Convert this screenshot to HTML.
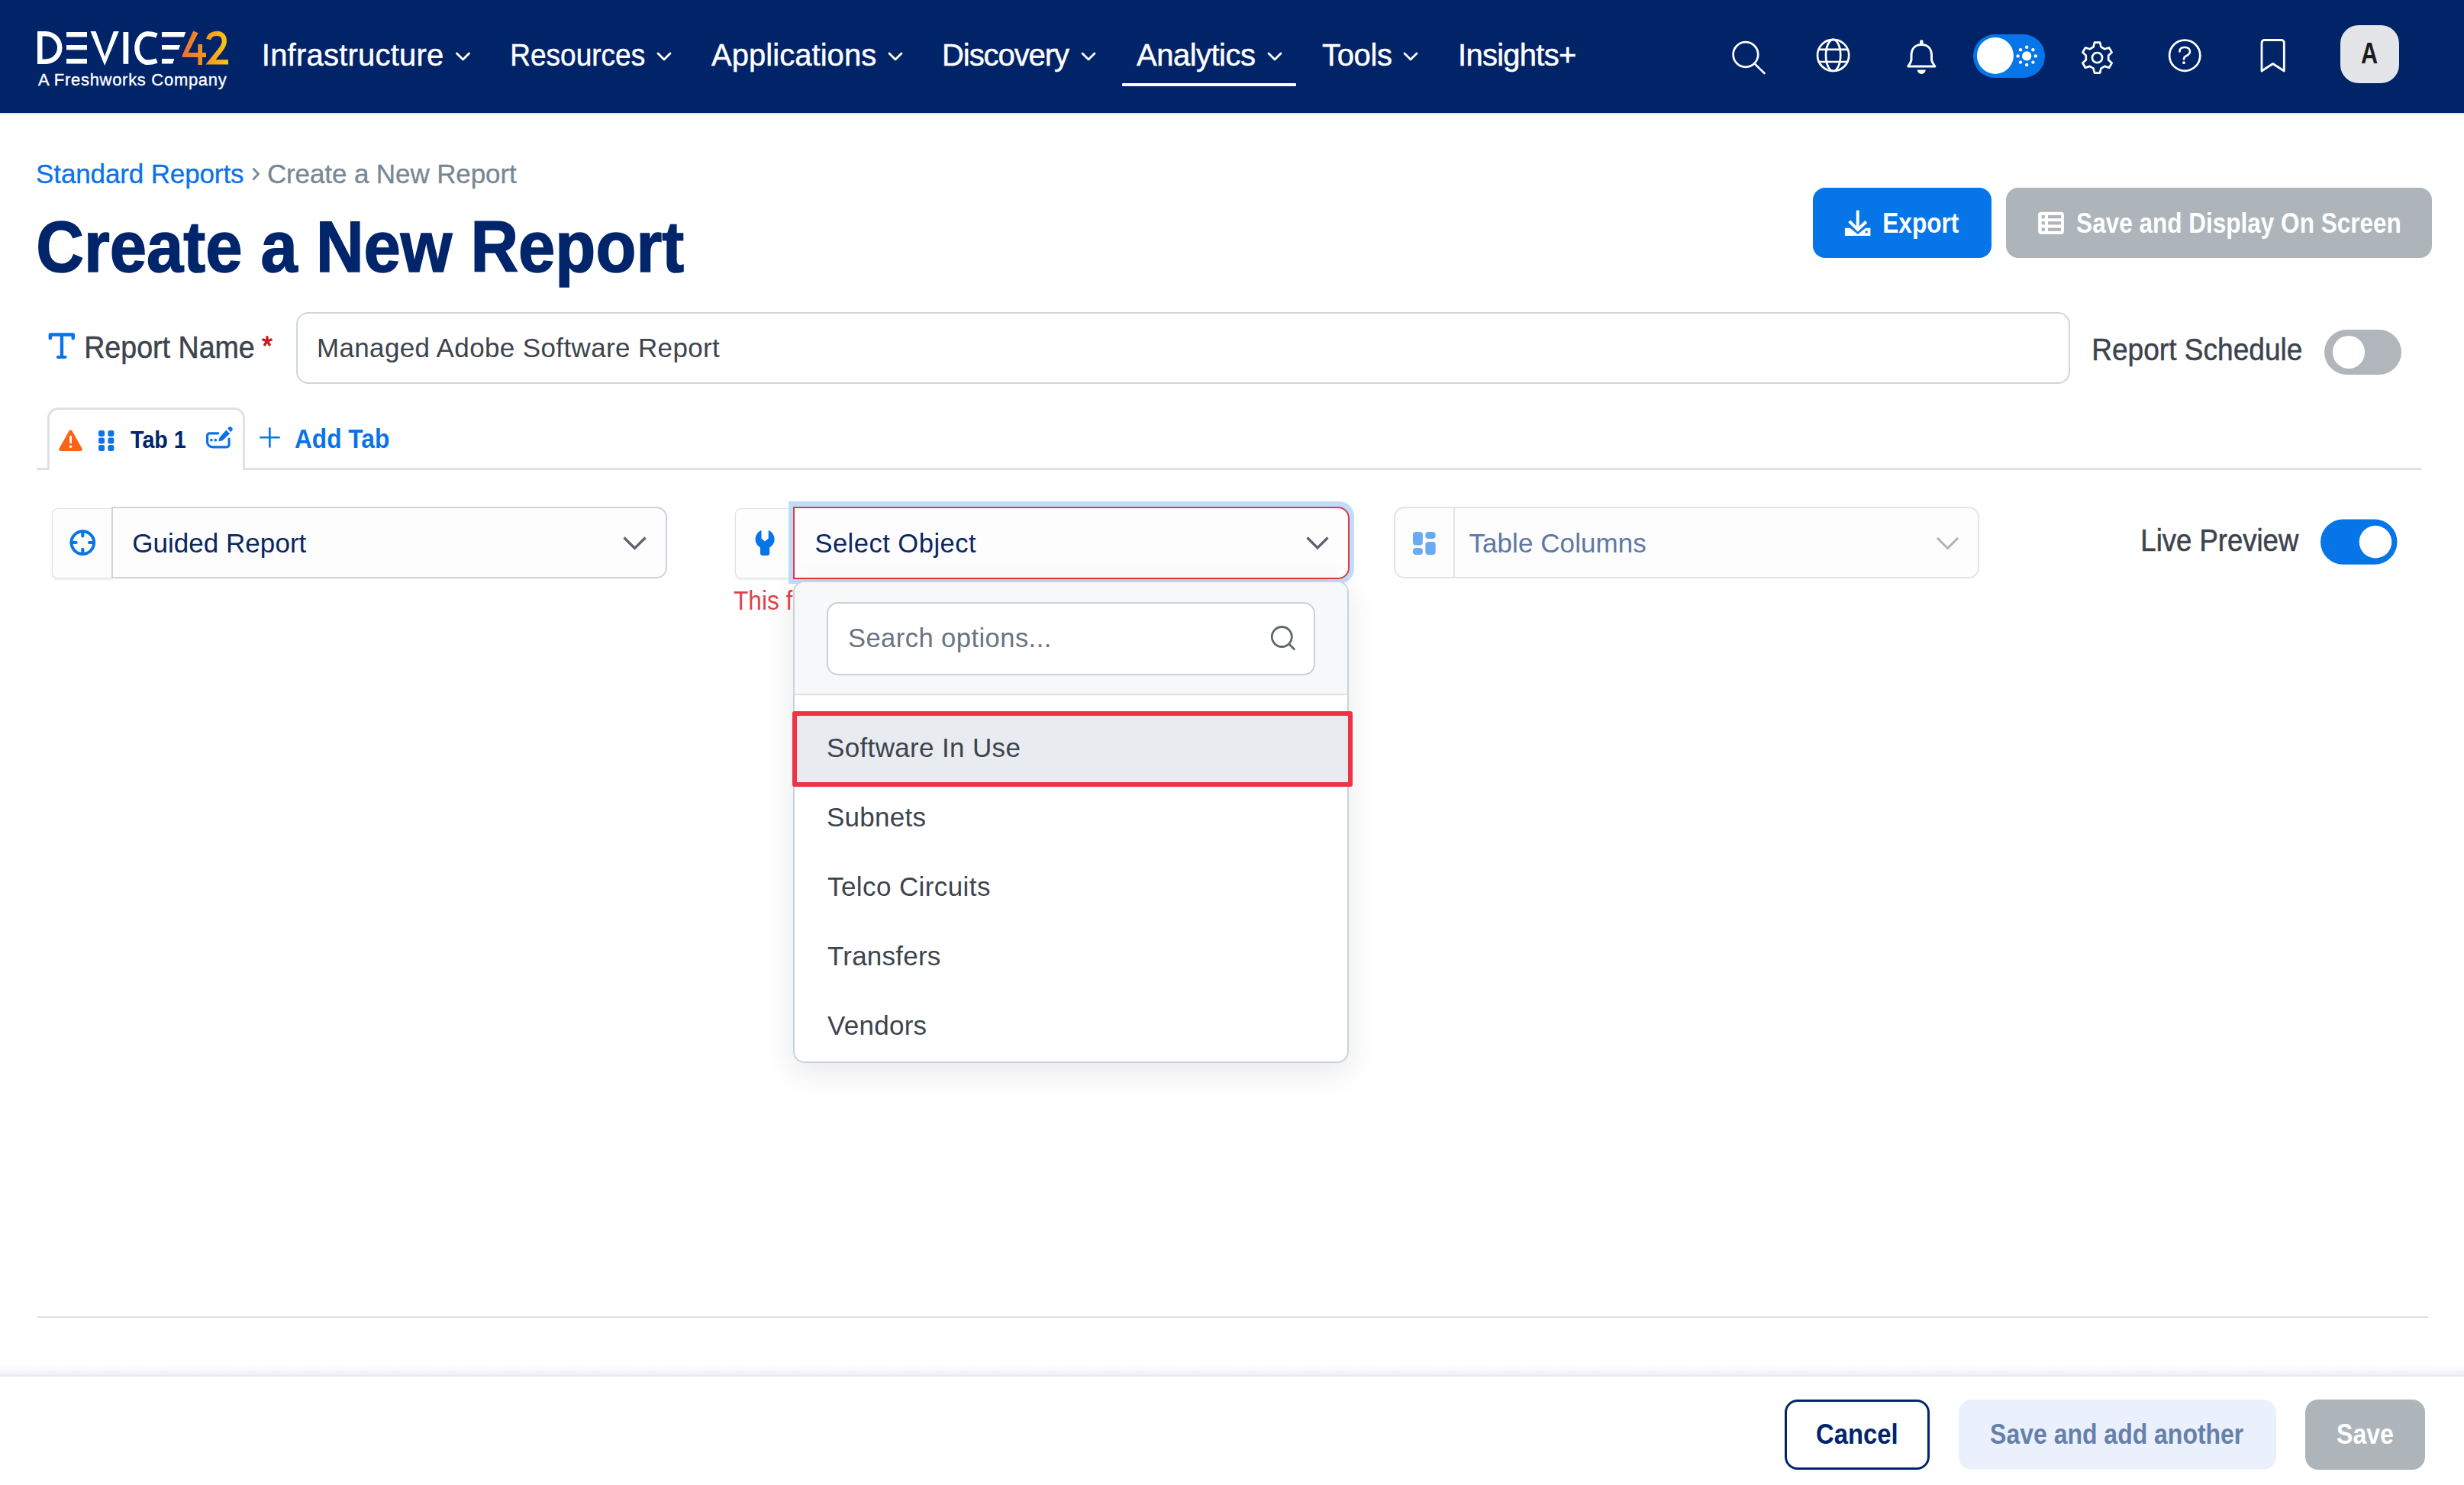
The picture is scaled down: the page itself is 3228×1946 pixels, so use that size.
<!DOCTYPE html>
<html><head><meta charset="utf-8">
<style>
*{box-sizing:border-box}
html,body{margin:0;padding:0}
body{width:3228px;height:1946px;position:relative;overflow:hidden;background:#fff;font-family:"Liberation Sans",sans-serif}
.a{position:absolute}
.t{position:absolute;white-space:nowrap;line-height:1;font-family:"Liberation Sans",sans-serif;z-index:7}
svg{position:absolute;overflow:visible}
</style></head><body>
<!-- navbar -->
<div class="a" style="left:0;top:0;width:3228px;height:148px;background:#012469"></div>
<div class="a" style="left:0;top:148px;width:3228px;height:2px;background:#e2e7eb"></div>
<svg style="left:0;top:0" width="320" height="148">
 <defs><linearGradient id="lg" x1="238" y1="0" x2="300" y2="0" gradientUnits="userSpaceOnUse"><stop offset="0" stop-color="#ee6f2f"/><stop offset="0.5" stop-color="#f59422"/><stop offset="1" stop-color="#fdca0e"/></linearGradient></defs>
 <path fill="#fff" fill-rule="evenodd" d="M49,41H60A21.5,21.5 0 0 1 60,84H49Z M55.5,47.5V77.5H60A15,15 0 0 0 60,47.5Z"/>
 <rect x="87" y="42" width="27" height="6.5" fill="#fff"/>
 <rect x="87" y="59" width="27" height="6.4" fill="#fff"/>
 <rect x="87" y="77" width="27" height="6.5" fill="#fff"/>
 <polygon fill="#fff" points="118.5,41 125.6,41 137.2,74 148.8,41 155.8,41 137.2,86"/>
 <rect x="161.4" y="42" width="6.9" height="41.8" fill="#fff"/>
 <path fill="none" stroke="#fff" stroke-width="6.5" d="M205.5,46.5C201,44.8 197,44.2 193.5,44.2A14,18.8 0 0 0 193.5,81.8C197,81.8 201,81.2 205.5,79.5"/>
 <polygon fill="#fff" points="212,42 243.2,42 241,48.6 212,48.6"/>
 <polygon fill="#fff" points="212,59 236,59 234,65 212,65"/>
 <polygon fill="#fff" points="212,77 228.3,77 226.3,83.5 212,83.5"/>
 <polygon fill="url(#lg)" points="253.2,40.4 259.6,43.2 246.6,69 270,69 270,75 238.7,75 238.7,72.5"/>
 <rect x="259.4" y="58" width="5.6" height="27" fill="url(#lg)"/>
 <path fill="none" stroke="url(#lg)" stroke-width="6.3" d="M273,51.5C274.5,46 279,43.8 284.5,43.8C290.5,43.8 293.8,48 293.8,54C293.8,58 292,61 289.5,64.5L276,81.4H299"/>
</svg>
<!-- nav chevrons -->
<svg style="left:0;top:0" width="3228" height="148">
 <g fill="none" stroke="#fff" stroke-width="2.8" stroke-linecap="round" stroke-linejoin="round">
  <polyline points="598.5,70 606.5,78 614.5,70"/>
  <polyline points="862,70 870,78 878,70"/>
  <polyline points="1165,70 1173,78 1181,70"/>
  <polyline points="1418,70 1426,78 1434,70"/>
  <polyline points="1662,70 1670,78 1678,70"/>
  <polyline points="1840,70 1848,78 1856,70"/>
 </g>
 <rect x="1470" y="109" width="228" height="4" rx="1" fill="#fff"/>
 <!-- search -->
 <g fill="none" stroke="#fff" stroke-width="2.7" stroke-linecap="round">
  <circle cx="2286.9" cy="71.5" r="16.3"/>
  <line x1="2298.8" y1="83.6" x2="2311.5" y2="96"/>
  <!-- globe -->
  <circle cx="2401.6" cy="72.4" r="20.6"/>
  <ellipse cx="2401.6" cy="72.4" rx="9.6" ry="20.6"/>
  <line x1="2383" y1="64.8" x2="2420" y2="64.8"/>
  <line x1="2383" y1="81" x2="2420" y2="81"/>
  <!-- gear -->
  <circle cx="2747.5" cy="75.6" r="6.6"/>
  <!-- help -->
  <circle cx="2862.2" cy="72.7" r="20.1"/>
  <path d="M2855.5,67.5C2855.5,63.5 2858.5,62 2862,62C2866,62 2869,64 2869,67.5C2869,71 2866.5,72 2863.5,73.6C2861.5,74.8 2861,75.8 2861,77.5"/>
 </g>
 <circle cx="2861" cy="82.2" r="1.9" fill="#fff"/>
 <!-- bell -->
 <path fill="none" stroke="#fff" stroke-width="3" stroke-linejoin="round" d="M2517.3,58.5C2508,58.5 2504,65 2504,73V78C2504,81 2501.5,84 2499.8,87H2534.8C2533,84 2530.5,81 2530.5,78V73C2530.5,65 2526.5,58.5 2517.3,58.5Z"/>
 <path fill="#fff" d="M2515,54.5A2.3,2.3 0 0 1 2519.6,54.5V58H2515Z"/>
 <path fill="#fff" d="M2511.8,91.5H2522.7A5.45,5.45 0 0 1 2511.8,91.5Z"/>
 <!-- gear outline -->
 <path fill="none" stroke="#fff" stroke-width="2.7" stroke-linejoin="round" d="M2744,55.6H2751L2752.5,61.5L2757.3,64.3L2763,62.5L2766.6,68.6L2762.2,72.7V78.5L2766.6,82.6L2763,88.7L2757.3,86.9L2752.5,89.7L2751,95.6H2744L2742.5,89.7L2737.7,86.9L2732,88.7L2728.4,82.6L2732.8,78.5V72.7L2728.4,68.6L2732,62.5L2737.7,64.3L2742.5,61.5Z"/>
 <!-- bookmark -->
 <path fill="none" stroke="#fff" stroke-width="2.8" stroke-linejoin="round" d="M2963,93V56A3.5,3.5 0 0 1 2966.5,52.5H2988.8A3.5,3.5 0 0 1 2992.3,56V93L2977.6,83.5Z"/>
 <!-- theme toggle -->
 <rect x="2585" y="45" width="94" height="57" rx="28.5" fill="#0675e8"/>
 <circle cx="2613.9" cy="72.9" r="24" fill="#fff"/>
 <g fill="#fff">
  <circle cx="2655.2" cy="73.4" r="6.1"/>
  <circle cx="2655.2" cy="61.8" r="2.2"/><circle cx="2655.2" cy="85" r="2.2"/>
  <circle cx="2643.6" cy="73.4" r="2.2"/><circle cx="2666.8" cy="73.4" r="2.2"/>
  <circle cx="2647" cy="65.2" r="2.2"/><circle cx="2663.4" cy="65.2" r="2.2"/>
  <circle cx="2647" cy="81.6" r="2.2"/><circle cx="2663.4" cy="81.6" r="2.2"/>
 </g>
</svg>
<div class="a" style="left:3066px;top:33px;width:77px;height:76px;border-radius:24px;background:#e3e5e8"></div>

<!-- breadcrumb sep -->
<svg style="left:0;top:0" width="400" height="260"><polyline points="331.5,220.5 338.5,228 331.5,235.5" fill="none" stroke="#778894" stroke-width="2.8"/></svg>

<!-- export / save display buttons -->
<div class="a" style="left:2375px;top:246px;width:234px;height:92px;border-radius:16px;background:#0675e8"></div>
<div class="a" style="left:2628px;top:246px;width:558px;height:92px;border-radius:16px;background:#adb5bb"></div>
<svg style="left:0;top:0" width="3228" height="400">
 <rect x="2431.8" y="275.6" width="3.9" height="22" fill="#fff"/>
 <polyline points="2422.7,289.9 2433.8,301 2444.8,290.5" fill="none" stroke="#fff" stroke-width="4"/>
 <polygon fill="#fff" points="2416.9,298.7 2423.5,298.7 2433.8,307 2444,298.7 2450.4,298.7 2450.4,309.1 2416.9,309.1"/>
 <circle cx="2445.2" cy="303.9" r="1.7" fill="#0675e8"/>
 <rect x="2670.1" y="277.8" width="33.8" height="29.2" rx="3.5" fill="#fff"/>
 <g fill="#adb5bb">
  <rect x="2674.7" y="282" width="4.1" height="4.2"/><rect x="2683" y="282" width="17" height="4.2"/>
  <rect x="2674.7" y="290.2" width="4.1" height="4.2"/><rect x="2683" y="290.2" width="17" height="4.2"/>
  <rect x="2674.7" y="298.6" width="4.1" height="4.2"/><rect x="2683" y="298.6" width="17" height="4.2"/>
 </g>
</svg>

<!-- report name row -->
<svg style="left:0;top:0" width="400" height="500">
 <path fill="#0a73e8" d="M63.6,438.5A2.3,2.3 0 0 1 65.9,436.2H95.7A2.3,2.3 0 0 1 98,438.5V443.7A2.3,2.3 0 0 1 93.5,443.7V440.8H83.1V466.1H86A2,2 0 0 1 86,470H75.4A2,2 0 0 1 75.4,466.1H78.8V440.8H68.1V443.7A2.3,2.3 0 0 1 63.6,443.7Z"/>
 <g stroke="#cc1a1f" stroke-width="3.4" stroke-linecap="round">
  <line x1="350" y1="441.8" x2="350" y2="447"/>
  <line x1="350" y1="447" x2="344.8" y2="445.2"/><line x1="350" y1="447" x2="355.2" y2="445.2"/>
  <line x1="350" y1="447" x2="346.8" y2="451.8"/><line x1="350" y1="447" x2="353.2" y2="451.8"/>
 </g>
</svg>
<div class="a" style="left:388px;top:409px;width:2324px;height:94px;border:2px solid #cfd6dd;border-radius:16px"></div>
<div class="a" style="left:3045px;top:432px;width:101px;height:59px;border-radius:30px;background:#b1b6bc"></div>
<div class="a" style="left:3055.5px;top:440px;width:42.5px;height:42.5px;border-radius:50%;background:#fff"></div>

<!-- tabs -->
<div class="a" style="left:0;top:613px;width:3172px;height:3px;background:#dde2e7;left:48px;width:3124px"></div>
<div class="a" style="left:62px;top:534px;width:259px;height:82px;border:3px solid #dde2e7;border-bottom:none;border-radius:14px 14px 0 0;background:#fff"></div>
<svg style="left:0;top:0" width="600" height="650">
 <path fill="#fb6418" d="M92.5,563.6C91.4,563.6 90.6,564.3 90,565.4L77.6,587.4C76.6,589.3 77.7,591 79.7,591H105.3C107.3,591 108.4,589.3 107.4,587.4L95,565.4C94.4,564.3 93.6,563.6 92.5,563.6Z"/>
 <rect x="91.2" y="571" width="2.8" height="10.5" rx="1.4" fill="#fff"/>
 <circle cx="92.6" cy="585.2" r="1.8" fill="#fff"/>
 <g fill="#0a73e8">
  <rect x="129" y="564" width="8" height="8" rx="2.5"/><rect x="141.4" y="564" width="8" height="8" rx="2.5"/>
  <rect x="129" y="573.5" width="8" height="8" rx="2.5"/><rect x="141.4" y="573.5" width="8" height="8" rx="2.5"/>
  <rect x="129" y="583" width="8" height="8" rx="2.5"/><rect x="141.4" y="583" width="8" height="8" rx="2.5"/>
 </g>
 <path fill="none" stroke="#0a73e8" stroke-width="3.2" stroke-linecap="round" d="M285.8,567.8H274.6A3,3 0 0 0 271.6,570.8V579.2C271.6,583 274.6,585.9 278.4,585.9H297A3.1,3.1 0 0 0 300.1,582.8V575"/>
 <circle cx="276.9" cy="576.7" r="1.85" fill="#0a73e8"/><circle cx="282.3" cy="576.7" r="1.85" fill="#0a73e8"/>
 <path fill="#0a73e8" d="M296.4,563.5L301,568.2L292.5,576.6C291,578 288.6,578.4 286.6,578.3C286.5,576.3 286.9,574 288.3,572.4Z"/>
 <path fill="#0a73e8" d="M298.1,561.5L300.7,559.1Q301.7,558.3 302.7,559.2L304.6,561.4Q305.4,562.5 304.5,563.5L302.2,566.3Z"/>
 <g stroke="#0a73e8" stroke-width="2.6" stroke-linecap="round"><line x1="341.3" y1="573.2" x2="365.6" y2="573.2"/><line x1="353.4" y1="561.3" x2="353.4" y2="585.5"/></g>
</svg>

<!-- dropdown row -->
<div class="a" style="left:68px;top:666px;width:80px;height:92px;border:1px solid #dfe2e6;border-right:none;border-radius:8px 0 0 8px;box-shadow:0 2px 3px rgba(0,0,0,0.08);background:#fdfdfe"></div>
<div class="a" style="left:146px;top:664px;width:728px;height:94px;border:2px solid #cdd4dc;border-radius:0 14px 14px 0;background:#fdfdfe"></div>
<svg style="left:0;top:0" width="900" height="800">
 <g fill="none" stroke="#0675e8" stroke-width="4" stroke-linecap="round">
  <circle cx="108.3" cy="711.1" r="14.85"/>
  <line x1="108.3" y1="697" x2="108.3" y2="702.5"/><line x1="108.3" y1="719.7" x2="108.3" y2="725.2"/>
  <line x1="94.2" y1="711.1" x2="99.7" y2="711.1"/><line x1="116.9" y1="711.1" x2="122.4" y2="711.1"/>
 </g>
 <polyline points="817.5,704.5 831.5,718.5 845.5,704.5" fill="none" stroke="#5a636d" stroke-width="3.2"/>
</svg>

<div class="a" style="left:962.5px;top:666px;width:80px;height:92px;border:1px solid #dfe2e6;border-right:none;border-radius:8px 0 0 8px;box-shadow:0 2px 3px rgba(0,0,0,0.08);background:#fdfdfe"></div>
<svg style="left:0;top:0" width="1100" height="800">
 <path fill="#0675e8" d="M997.5,694.8V705.5L1002.1,709.5L1006.7,705.5V694.8C1011.5,697 1014.6,701.5 1014.6,706.8C1014.6,711.3 1012.3,715 1008.2,717.5V725C1008.2,726.8 1007,728 1005,728H999.2C997.2,728 996,726.8 996,725V717.5C991.9,715 989.6,711.3 989.6,706.8C989.6,701.5 992.7,697 997.5,694.8Z"/>
</svg>
<div class="a" style="left:1033px;top:657px;width:741px;height:108px;background:#c0dcfd;border-radius:0 20px 20px 0"></div>
<div class="a" style="left:1039px;top:664px;width:729px;height:95px;border:2.2px solid #dc3c42;border-radius:0 15px 15px 0;background:#fdfdfe"></div>
<svg style="left:0;top:0" width="1800" height="800">
 <polyline points="1712.5,704.5 1726,718 1739.5,704.5" fill="none" stroke="#5a636d" stroke-width="3.2"/>
</svg>

<div class="a" style="left:1826px;top:664px;width:767px;height:94px;border:2px solid #e1e5ea;border-radius:14px;background:#fdfdfe"></div>
<div class="a" style="left:1904px;top:665px;width:2px;height:92px;background:#e1e5ea"></div>
<svg style="left:0;top:0" width="3228" height="800">
 <g fill="#69abf0">
  <rect x="1851" y="697" width="12.9" height="17.6" rx="4"/><rect x="1867.4" y="697" width="13.3" height="9.1" rx="4"/>
  <rect x="1851" y="718" width="12.9" height="9" rx="4"/><rect x="1867.4" y="710" width="13.3" height="17" rx="4"/>
 </g>
 <polyline points="2538,705 2551.5,718.5 2565,705" fill="none" stroke="#a9b1ba" stroke-width="3"/>
 <rect x="3040" y="680.5" width="100.5" height="59.2" rx="29.6" fill="#0675e8"/>
 <circle cx="3112" cy="710.1" r="21.3" fill="#fff"/>
</svg>

<!-- texts -->
<div class="t" style="left:342.8px;top:52.1px;font-size:40px;font-weight:normal;color:#fff;letter-spacing:0.22px;-webkit-text-stroke:0.45px #fff">Infrastructure</div>
<div class="t" style="left:667.5px;top:52.1px;font-size:40px;font-weight:normal;color:#fff;transform:scaleX(0.9255);transform-origin:3.0px 0;-webkit-text-stroke:0.45px #fff">Resources</div>
<div class="t" style="left:931.9px;top:52.1px;font-size:40px;font-weight:normal;color:#fff;letter-spacing:0.06px;-webkit-text-stroke:0.45px #fff">Applications</div>
<div class="t" style="left:1234.0px;top:52.1px;font-size:40px;font-weight:normal;color:#fff;letter-spacing:-1.07px;-webkit-text-stroke:0.45px #fff">Discovery</div>
<div class="t" style="left:1489.0px;top:52.1px;font-size:40px;font-weight:normal;color:#fff;letter-spacing:-0.51px;-webkit-text-stroke:0.45px #fff">Analytics</div>
<div class="t" style="left:1732.0px;top:52.1px;font-size:40px;font-weight:normal;color:#fff;letter-spacing:-0.34px;-webkit-text-stroke:0.45px #fff">Tools</div>
<div class="t" style="left:1910.0px;top:52.1px;font-size:40px;font-weight:normal;color:#fff;letter-spacing:-0.73px;-webkit-text-stroke:0.45px #fff">Insights+</div>
<div class="t" style="left:49.9px;top:93.9px;font-size:22px;font-weight:normal;color:#fff;letter-spacing:0.70px;-webkit-text-stroke:0.35px #fff">A Freshworks Company</div>
<div class="t" style="left:3093.0px;top:50.1px;font-size:39px;font-weight:bold;color:#1c1c1c;transform:scaleX(0.7857);transform-origin:0.0px 0">A</div>
<div class="t" style="left:47.1px;top:210.2px;font-size:35px;font-weight:normal;color:#0a73e8;letter-spacing:-0.13px;-webkit-text-stroke:0.3px #0a73e8">Standard Reports</div>
<div class="t" style="left:349.9px;top:210.2px;font-size:35px;font-weight:normal;color:#778894;letter-spacing:-0.11px;-webkit-text-stroke:0.3px #778894">Create a New Report</div>
<div class="t" style="left:46.5px;top:276.1px;font-size:95px;font-weight:bold;color:#00256a;transform:scaleX(0.9135);transform-origin:3.0px 0;-webkit-text-stroke:1.6px #00256a">Create a New Report</div>
<div class="t" style="left:2466.4px;top:275.4px;font-size:36px;font-weight:bold;color:#fff;transform:scaleX(0.8775);transform-origin:2.0px 0">Export</div>
<div class="t" style="left:2719.7px;top:275.4px;font-size:36px;font-weight:bold;color:#fff;transform:scaleX(0.8754);transform-origin:1.0px 0">Save and Display On Screen</div>
<div class="t" style="left:110.0px;top:435.1px;font-size:40px;font-weight:normal;color:#3d444d;transform:scaleX(0.9400);transform-origin:3.0px 0;-webkit-text-stroke:0.5px #3d444d">Report Name</div>
<div class="t" style="left:414.9px;top:438.4px;font-size:35px;font-weight:normal;color:#3d444d;letter-spacing:0.37px">Managed Adobe Software Report</div>
<div class="t" style="left:2740.2px;top:438.1px;font-size:40px;font-weight:normal;color:#3d444d;transform:scaleX(0.9267);transform-origin:3.0px 0;-webkit-text-stroke:0.5px #3d444d">Report Schedule</div>
<div class="t" style="left:171.0px;top:560.2px;font-size:32px;font-weight:bold;color:#00256a;transform:scaleX(0.8955);transform-origin:0.0px 0">Tab 1</div>
<div class="t" style="left:386.0px;top:556.8px;font-size:35px;font-weight:bold;color:#0a73e8;transform:scaleX(0.9044);transform-origin:0.0px 0">Add Tab</div>
<div class="t" style="left:173.2px;top:694.2px;font-size:35px;font-weight:normal;color:#0b2660;letter-spacing:0.04px">Guided Report</div>
<div class="t" style="left:1067.4px;top:694.5px;font-size:34.5px;font-weight:normal;color:#0b2660;letter-spacing:0.50px">Select Object</div>
<div class="t" style="left:1924.4px;top:694.4px;font-size:35px;font-weight:normal;color:#5e78a3;letter-spacing:0.08px">Table Columns</div>
<div class="t" style="left:2803.7px;top:687.6px;font-size:41px;font-weight:normal;color:#3d444d;transform:scaleX(0.8903);transform-origin:3.0px 0;-webkit-text-stroke:0.6px #3d444d">Live Preview</div>
<div class="t" style="left:960.9px;top:768.6px;font-size:35px;font-weight:normal;color:#e0434b;transform:scaleX(0.9040);transform-origin:0.0px 0;z-index:1">This field is required</div>
<div class="t" style="left:1111.0px;top:818.8px;font-size:34.5px;font-weight:normal;color:#6b7480;letter-spacing:0.46px">Search options...</div>
<div class="t" style="left:1083.0px;top:962.4px;font-size:35px;font-weight:normal;color:#3d444d;letter-spacing:0.35px">Software In Use</div>
<div class="t" style="left:1083.0px;top:1053.4px;font-size:35px;font-weight:normal;color:#3d444d;letter-spacing:0.26px">Subnets</div>
<div class="t" style="left:1084.0px;top:1144.4px;font-size:35px;font-weight:normal;color:#3d444d;letter-spacing:0.41px">Telco Circuits</div>
<div class="t" style="left:1084.0px;top:1235.4px;font-size:35px;font-weight:normal;color:#3d444d;letter-spacing:0.22px">Transfers</div>
<div class="t" style="left:1084.0px;top:1326.4px;font-size:35px;font-weight:normal;color:#3d444d;letter-spacing:0.28px">Vendors</div>
<div class="t" style="left:2379.2px;top:1862.2px;font-size:36px;font-weight:bold;color:#00256a;transform:scaleX(0.9109);transform-origin:1.0px 0">Cancel</div>
<div class="t" style="left:2607.0px;top:1862.2px;font-size:36px;font-weight:bold;color:#6580ab;transform:scaleX(0.8880);transform-origin:1.0px 0">Save and add another</div>
<div class="t" style="left:3060.5px;top:1862.2px;font-size:36px;font-weight:bold;color:#fff;transform:scaleX(0.8897);transform-origin:1.0px 0">Save</div>

<!-- dropdown panel -->
<div class="a" style="left:1039px;top:761px;width:728px;height:632px;border:2px solid #cbd2d9;border-radius:15px;background:#fff;box-shadow:0 12px 40px rgba(20,30,50,0.10);z-index:5">
 <div class="a" style="left:0;top:0;width:724px;height:148px;background:#f7f8fa;border-bottom:2px solid #dde1e6;border-radius:13px 13px 0 0"></div>
 <div class="a" style="left:42px;top:25.5px;width:640px;height:96px;border:2px solid #c9d0d7;border-radius:15px;background:#fff"></div>
 <svg style="left:0;top:0" width="728" height="632">
  <g fill="none" stroke="#5f6770" stroke-width="2.8" stroke-linecap="round"><circle cx="638.3" cy="71.5" r="13"/><line x1="647.8" y1="81" x2="654.5" y2="87.7"/></g>
 </svg>
</div>
<div class="a" style="left:1038px;top:931.5px;width:733.5px;height:99px;background:#e8ebef;border:6px solid #ef3344;border-radius:3px;z-index:6"></div>

<!-- bottom line & footer -->
<div class="a" style="left:48px;top:1725px;width:3133px;height:2px;background:#dde2e7"></div>
<div class="a" style="left:0;top:1788px;width:3228px;height:16px;background:linear-gradient(to bottom,rgba(255,255,255,0) 0%,#f8f9fa 50%,#eef0f4 80%,#e2e6ee 100%)"></div>
<div class="a" style="left:0;top:1804px;width:3228px;height:142px;background:#fff"></div>
<div class="a" style="left:2338px;top:1834px;width:190px;height:92px;border:3px solid #00256a;border-radius:17px;background:#fff;z-index:2"></div>
<div class="a" style="left:2566px;top:1834px;width:416px;height:92px;border-radius:17px;background:#ebf1fc;z-index:2"></div>
<div class="a" style="left:3020px;top:1834px;width:157px;height:92px;border-radius:17px;background:#adb5bb;z-index:2"></div>
</body></html>
